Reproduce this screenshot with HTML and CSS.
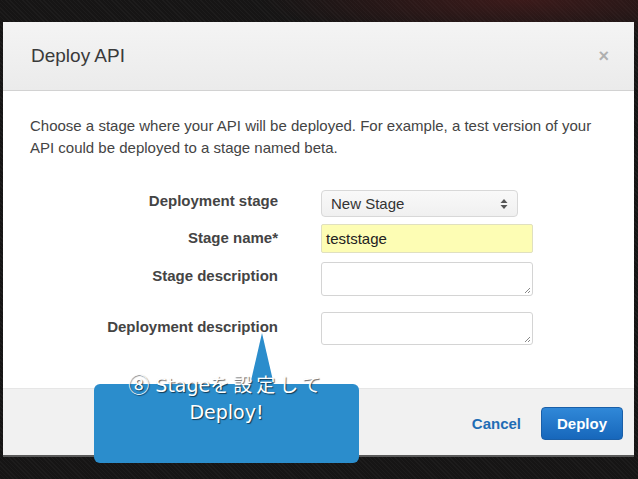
FILE: index.html
```html
<!DOCTYPE html>
<html>
<head>
<meta charset="utf-8">
<link rel="stylesheet" href="styles.css">
</head>
<body>
<div class="screen">
  <div class="modal">
    <div class="modal-header">
      <h1 class="modal-title">Deploy API</h1>
      <span class="close">×</span>
    </div>
    <div class="modal-body">
      <p class="intro">Choose a stage where your API will be deployed. For example, a test version of your API could be deployed to a stage named beta.</p>
      <div class="form">
        <div class="row row-select">
          <label class="label">Deployment stage</label>
          <div class="select">
            <span>New Stage</span>
            <svg class="updown" width="8" height="12" viewBox="0 0 8 12"><path d="M4 1 L7.5 5 H0.5 Z M4 11 L7.5 7 H0.5 Z" fill="#555"/></svg>
          </div>
        </div>
        <div class="row row-input">
          <label class="label">Stage name*</label>
          <div class="input">teststage</div>
        </div>
        <div class="row row-ta1">
          <label class="label">Stage description</label>
          <div class="textarea">
            <svg class="grip" width="8" height="8" viewBox="0 0 8 8"><path d="M7 2 L2 7 M7 5 L5 7" stroke="#888" stroke-width="1"/></svg>
          </div>
        </div>
        <div class="row row-ta2">
          <label class="label">Deployment description</label>
          <div class="textarea">
            <svg class="grip" width="8" height="8" viewBox="0 0 8 8"><path d="M7 2 L2 7 M7 5 L5 7" stroke="#888" stroke-width="1"/></svg>
          </div>
        </div>
      </div>
    </div>
    <div class="modal-footer">
      <span class="cancel">Cancel</span>
      <span class="deploy">Deploy</span>
    </div>
  </div>
  <div class="callout">
    <div class="callout-arrow"></div>
    <div class="callout-text"><span class="num">⑧</span> Stage<span class="jp">を設定して</span><br>Deploy!</div>
  </div>
</div>
</body>
</html>
```

FILE: styles.css
```css
html, body {
  margin: 0;
  padding: 0;
}
body {
  width: 638px;
  height: 479px;
  overflow: hidden;
  background: #171616;
  font-family: "Liberation Sans", Arial, sans-serif;
}
.screen {
  position: relative;
  width: 638px;
  height: 479px;
  background:
    radial-gradient(ellipse 260px 40px at 520px 0px, rgba(90, 30, 30, 0.55), rgba(0,0,0,0)),
    repeating-linear-gradient(45deg, rgba(255,255,255,0.03) 0 1px, rgba(0,0,0,0) 1px 3px),
    #161515;
  padding: 22px 0 0 3px;
  box-sizing: border-box;
}
.modal {
  width: 631px;
  height: 435px;
  background: #fff;
  display: flex;
  flex-direction: column;
  border-bottom: 2px solid #5a5a5a;
  box-sizing: border-box;
}
.modal-header {
  height: 69px;
  flex: none;
  box-sizing: border-box;
  display: flex;
  align-items: center;
  justify-content: space-between;
  padding: 0 25px 0 28px;
  background: linear-gradient(#f4f4f4, #ebebeb);
  border-bottom: 1px solid #d2d2d2;
}
.modal-title {
  margin: 0;
  font-weight: normal;
  font-size: 19px;
  color: #3a3a3a;
}
.close {
  font-size: 18px;
  color: #b0b0b0;
  font-weight: bold;
  margin-top: 1px;
}
.modal-body {
  flex: 1;
  padding: 24px 27px 0 27px;
}
.intro {
  margin: 0;
  font-size: 15px;
  line-height: 22px;
  color: #444;
}
.form {
  margin-top: 31px;
  display: flex;
  flex-direction: column;
}
.row {
  display: grid;
  grid-template-columns: 248px 212px;
  column-gap: 43px;
  align-items: start;
}
.label {
  text-align: right;
  font-weight: bold;
  font-size: 15px;
  color: #444;
}
.row-select .label { padding-top: 2px; }
.row-input { margin-top: 7px; }
.row-input .label { padding-top: 5px; }
.row-ta1 { margin-top: 9px; }
.row-ta1 .label { padding-top: 5px; }
.row-ta2 { margin-top: 16px; }
.row-ta2 .label { padding-top: 6px; }
.select {
  width: 197px;
  height: 27px;
  box-sizing: border-box;
  border: 1px solid #d8d8d8;
  border-radius: 4px;
  background: linear-gradient(#f9f9f9, #f0f0f0);
  display: flex;
  align-items: center;
  justify-content: space-between;
  padding: 0 9px 0 9px;
  font-size: 15px;
  color: #333;
}
.updown { display: block; }
.input {
  height: 29px;
  box-sizing: border-box;
  border: 1px solid #e0e0c0;
  border-radius: 2px;
  background: #fdfdb4;
  padding: 0 4px;
  display: flex;
  align-items: center;
  font-size: 15px;
  color: #222;
}
.textarea {
  height: 34px;
  box-sizing: border-box;
  border: 1px solid #d4d4d4;
  border-radius: 3px;
  background: #fff;
  position: relative;
}
.row-ta2 .textarea { height: 33px; }
.grip {
  position: absolute;
  right: 1px;
  bottom: 1px;
}
.modal-footer {
  height: 67px;
  flex: none;
  box-sizing: border-box;
  background: #f1f1f1;
  border-top: 1px solid #e6e6e6;
  display: flex;
  align-items: center;
  justify-content: flex-end;
  padding: 3px 11px 0 0;
  gap: 20px;
}
.cancel {
  font-size: 15px;
  font-weight: bold;
  color: #1f6db5;
}
.deploy {
  width: 82px;
  height: 33px;
  box-sizing: border-box;
  border-radius: 4px;
  border: 1px solid #1a5fa8;
  background: linear-gradient(#3088d8, #1767bb);
  color: #fff;
  font-size: 15px;
  font-weight: bold;
  display: flex;
  align-items: center;
  justify-content: center;
}
.callout {
  position: absolute;
  left: 94px;
  top: 384px;
  width: 265px;
  height: 79px;
  background: #2b8dcc;
  border-radius: 6px;
}
.callout-arrow {
  position: absolute;
  left: 156px;
  top: -51px;
  width: 0;
  height: 0;
  border-left: 12px solid transparent;
  border-right: 12px solid transparent;
  border-bottom: 52px solid #2b8dcc;
}
.callout-text {
  position: absolute;
  left: 0;
  right: 0;
  top: -14px;
  text-align: center;
  color: #fff;
  font-family: "DejaVu Sans", "Noto Sans CJK JP", sans-serif;
  font-size: 19px;
  line-height: 27px;
  text-shadow: 1px 1px 1px rgba(0, 0, 0, 0.6);
}
.callout-text .num {
  font-family: "Noto Sans CJK JP", sans-serif;
  font-size: 21px;
}
.callout-text .jp {
  font-family: "Noto Sans CJK JP", sans-serif;
  letter-spacing: 4px;
}
```
